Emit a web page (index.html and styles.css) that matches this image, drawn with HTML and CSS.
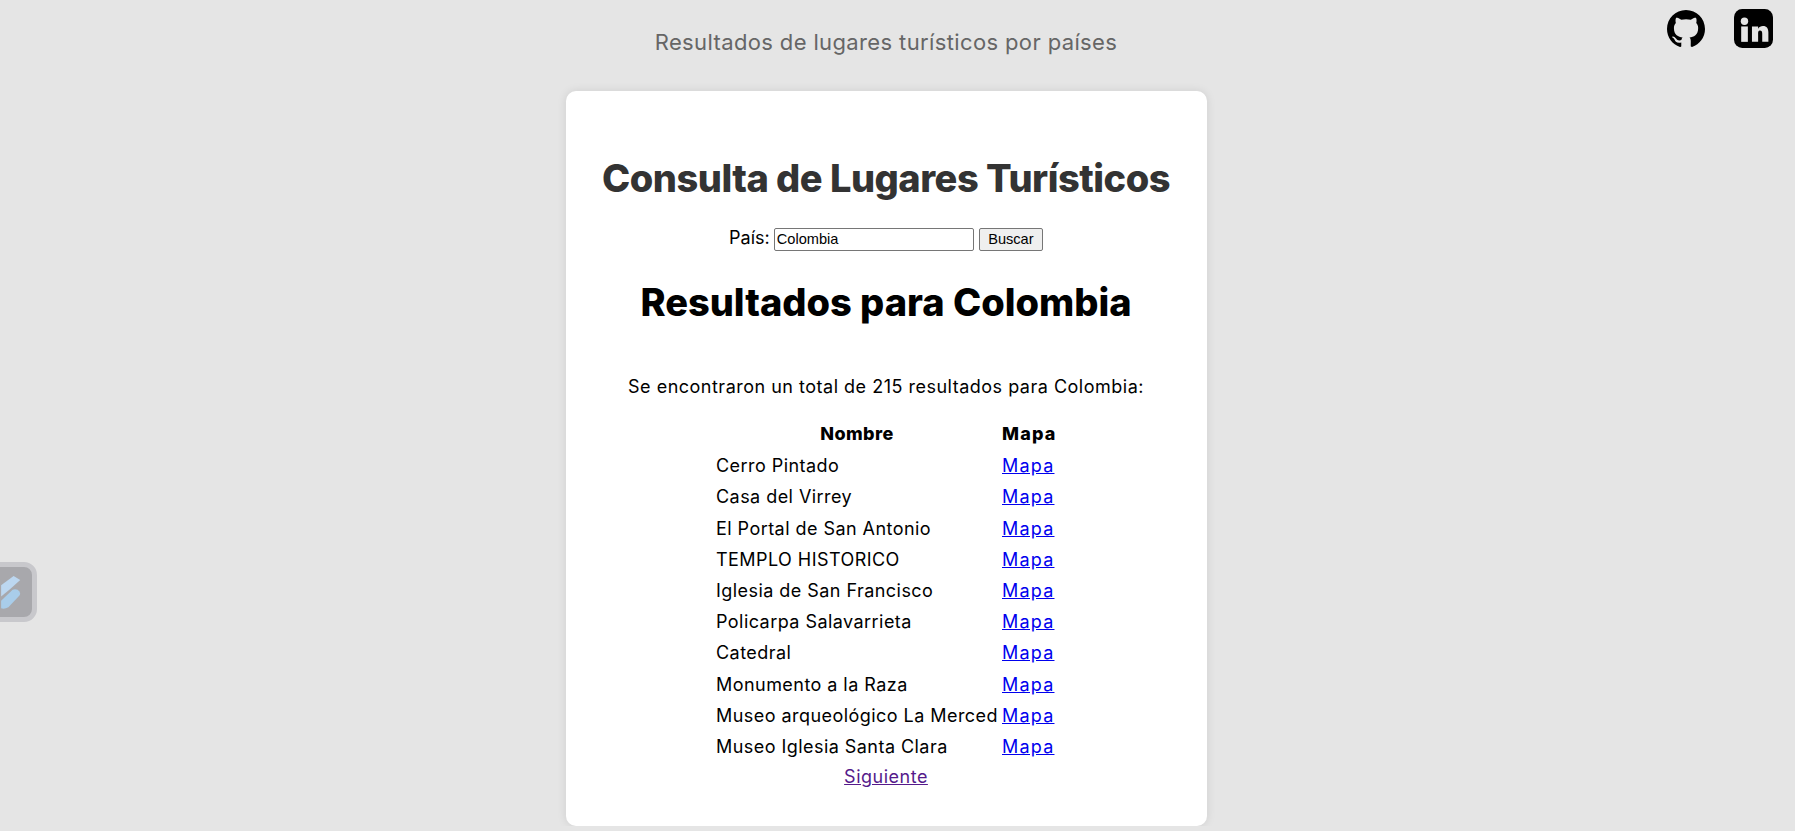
FILE: index.html
```html
<!DOCTYPE html>
<html lang="en">

<head>
    <meta charset="UTF-8">
    <title>Lugares Turísticos</title>
    <link rel="stylesheet" href="styles.css">
</head>

<body>
    <header class="top-bar">
        <p class="top-title">Resultados de lugares turísticos por países</p>
        <div class="social">
            <a href="#" class="social-link" aria-label="GitHub">
                <svg class="icon-github" viewBox="0 0 16 16">
                    <path d="M8 0C3.58 0 0 3.58 0 8c0 3.54 2.29 6.53 5.47 7.59.4.07.55-.17.55-.38 0-.19-.01-.82-.01-1.49-2.01.37-2.53-.49-2.69-.94-.09-.23-.48-.94-.82-1.13-.28-.15-.68-.52-.01-.53.63-.01 1.08.58 1.23.82.72 1.21 1.87.87 2.33.66.07-.52.28-.87.51-1.07-1.78-.2-3.64-.89-3.64-3.95 0-.87.31-1.59.82-2.15-.08-.2-.36-1.02.08-2.12 0 0 .67-.21 2.2.82.64-.18 1.32-.27 2-.27.68 0 1.36.09 2 .27 1.53-1.04 2.2-.82 2.2-.82.44 1.1.16 1.92.08 2.12.51.56.82 1.27.82 2.15 0 3.07-1.87 3.75-3.65 3.95.29.25.54.73.54 1.48 0 1.07-.01 1.93-.01 2.2 0 .21.15.46.55.38A8.013 8.013 0 0016 8c0-4.42-3.58-8-8-8z" />
                </svg>
            </a>
            <a href="#" class="social-link" aria-label="LinkedIn">
                <svg class="icon-linkedin" viewBox="0 0 38 38">
                    <rect width="38" height="38" rx="8" fill="#000" />
                    <rect x="7" y="17" width="6.5" height="15" fill="#e5e5e5" />
                    <circle cx="10.2" cy="12" r="3.6" fill="#e5e5e5" />
                    <path d="M17.5 17h6v2.2c1-1.6 2.7-2.6 4.7-2.6 3.8 0 5.3 2.6 5.3 6.4v9h-6v-8c0-1.8-.6-3-2.2-3-1.7 0-1.8 1.4-1.8 3v8h-6z" fill="#e5e5e5" />
                </svg>
            </a>
        </div>
    </header>

    <main class="card">
        <h1 class="main-title">Consulta de Lugares Turísticos</h1>
        <form class="search-form">
            <label for="pais">País:</label>
            <input type="text" id="pais" value="Colombia">
            <input type="submit" value="Buscar">
        </form>

        <h1 class="results-title">Resultados para Colombia</h1>
        <p class="results-count">Se encontraron un total de 215 resultados para Colombia:</p>

        <table class="results">
            <tr>
                <th class="col-name">Nombre</th>
                <th class="col-map">Mapa</th>
            </tr>
            <tr><td>Cerro Pintado</td><td class="col-map"><a href="#">Mapa</a></td></tr>
            <tr><td>Casa del Virrey</td><td class="col-map"><a href="#">Mapa</a></td></tr>
            <tr><td>El Portal de San Antonio</td><td class="col-map"><a href="#">Mapa</a></td></tr>
            <tr><td>TEMPLO HISTORICO</td><td class="col-map"><a href="#">Mapa</a></td></tr>
            <tr><td>Iglesia de San Francisco</td><td class="col-map"><a href="#">Mapa</a></td></tr>
            <tr><td>Policarpa Salavarrieta</td><td class="col-map"><a href="#">Mapa</a></td></tr>
            <tr><td>Catedral</td><td class="col-map"><a href="#">Mapa</a></td></tr>
            <tr><td>Monumento a la Raza</td><td class="col-map"><a href="#">Mapa</a></td></tr>
            <tr><td>Museo arqueológico La Merced</td><td class="col-map"><a href="#">Mapa</a></td></tr>
            <tr><td>Museo Iglesia Santa Clara</td><td class="col-map"><a href="#">Mapa</a></td></tr>
        </table>

        <a href="#" class="next-link">Siguiente</a>
    </main>

    <div class="side-widget">
        <svg class="side-icon" viewBox="0 0 60 100">
            <path d="M0 28 L38 0 L58 12 L25 42 L0 62 Z" fill="#bcd7f0" />
            <path d="M0 75 L35 42 Q42 38 50 42 Q62 50 55 60 L22 95 Q10 102 0 98 Z" fill="#a9cdea" />
        </svg>
    </div>
</body>

</html>
```

FILE: styles.css
```css
body {
    margin: 0;
    padding-right: 23px;
    font-family: Inter, "Noto Sans", sans-serif;
    background-color: #e5e5e5;
    color: #000000;
}

.top-bar {
    height: 91px;
    text-align: center;
}

.top-title {
    margin: 0;
    padding-top: 27px;
    font-size: 22px;
    line-height: 30px;
    letter-spacing: 0.37px;
    color: #666666;
}

/* icons sit over the header, top right */
.social {
    position: absolute;
    top: 9px;
    right: 22px;
    display: flex;
    align-items: center;
    gap: 29px;
}

.social-link {
    display: block;
    color: #000000;
}

.social-link svg {
    display: block;
}

.icon-github {
    width: 38px;
    height: 38px;
}

.icon-linkedin {
    width: 39px;
    height: 39px;
}

.card {
    box-sizing: border-box;
    width: 641px;
    height: 735px;
    margin: 0 auto;
    padding: 60px 20px 0;
    background-color: #ffffff;
    border-radius: 10px;
    box-shadow: 0 0 10px rgba(0, 0, 0, 0.1);
    text-align: center;
}

.main-title {
    margin: 0 0 19px;
    font-size: 38px;
    line-height: 54px;
    font-weight: 800;
    letter-spacing: -0.5px;
    color: #333333;
}

.search-form {
    font-size: 18px;
    line-height: 27px;
}

.search-form label {
    margin-right: -1px;
}

.search-form input {
    font-family: "Liberation Sans", Arial, sans-serif;
    font-size: 14.6px;
    box-sizing: border-box;
    height: 23px;
    vertical-align: baseline;
}

.search-form input[type="text"] {
    width: 200px;
    padding: 1px 2px;
    border: 1px solid #767676;
    border-radius: 2px;
}

.search-form input[type="submit"] {
    width: 64px;
    padding: 1px 6px;
    border: 1px solid #767676;
    border-radius: 2px;
    background-color: #efefef;
}

.results-title {
    margin: 23px 0 42px;
    font-size: 38px;
    line-height: 57px;
    font-weight: 800;
}

.results-count {
    margin: 0 0 17px;
    font-size: 18px;
    line-height: 27px;
    letter-spacing: 0.5px;
}

.results {
    margin: 0 auto;
    width: 346px;
    table-layout: fixed;
    font-size: 18px;
    line-height: 27.2px;
    letter-spacing: 0.45px;
    text-align: left;
}

.results th {
    font-weight: 800;
    padding-bottom: 2px;
}

.col-name {
    width: 282px;
    text-align: center;
}

.results .col-map {
    letter-spacing: 1.2px;
}

.results td,
.results th {
    padding-top: 1px;
    padding-left: 1px;
    padding-right: 1px;
    white-space: nowrap;
}

.results td {
    padding-bottom: 1px;
}

.next-link {
    font-size: 18px;
    line-height: 27px;
    letter-spacing: 0.5px;
}

a {
    color: #0000ee;
}

.next-link {
    color: #551a8b;
}

.side-widget {
    position: absolute;
    left: -24px;
    top: 562px;
    width: 61px;
    height: 60px;
    box-sizing: border-box;
    border: 5px solid #c8c8cc;
    border-radius: 13px;
    background-color: #a8a8ac;
    display: flex;
    justify-content: flex-end;
    align-items: center;
}

.side-icon {
    width: 20px;
    height: 33px;
    margin-right: 11px;
}
```
